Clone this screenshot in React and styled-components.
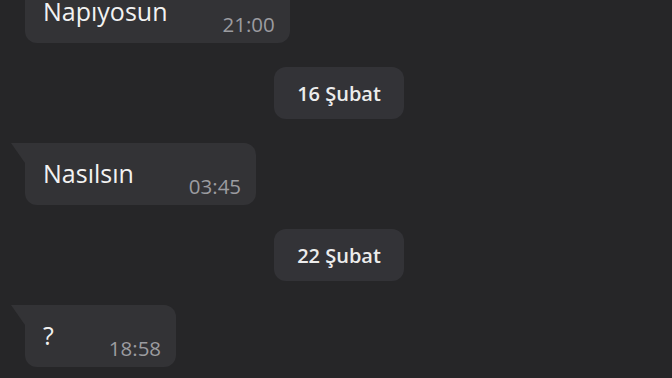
import React from 'react';
import styled, { createGlobalStyle } from 'styled-components';

const messages = [
  { type: 'msg', text: 'Napıyosun', time: '21:00', tail: false },
  { type: 'date', text: '16 Şubat' },
  { type: 'msg', text: 'Nasılsın', time: '03:45', tail: true },
  { type: 'date', text: '22 Şubat' },
  { type: 'msg', text: '?', time: '18:58', tail: true },
];

export default function App() {
  return (
    <>
      <GlobalStyle />
      <Chat>
        {messages.map((m, i) =>
          m.type === 'date' ? (
            <DateRow key={i}>
              <DatePill>{m.text}</DatePill>
            </DateRow>
          ) : (
            <Bubble key={i} $tail={m.tail}>
              <Text>{m.text}</Text>
              <Time>{m.time}</Time>
            </Bubble>
          )
        )}
      </Chat>
    </>
  );
}

const GlobalStyle = createGlobalStyle`
  html, body {
    margin: 0;
    padding: 0;
    background: #262628;
    overflow: hidden;
    height: 378px;
  }
  body {
    font-family: "Open Sans", "Noto Sans", sans-serif;
  }
`;

const Chat = styled.div`
  display: flex;
  flex-direction: column;
  align-items: flex-start;
  gap: 24px;
  margin-top: -19px;
  padding: 0 25px;
`;

const Bubble = styled.div`
  position: relative;
  display: flex;
  align-items: flex-end;
  gap: 55px;
  height: 62px;
  box-sizing: border-box;
  padding: 0 15px 9px 18px;
  background: #333336;
  border-radius: ${p => (p.$tail ? '0 12px 12px 12px' : '12px')};

  &::before {
    content: '';
    display: ${p => (p.$tail ? 'block' : 'none')};
    position: absolute;
    left: -14px;
    top: 0;
    width: 14px;
    height: 20px;
    background: #333336;
    clip-path: polygon(0 0, 100% 0, 100% 100%);
  }
`;

const Text = styled.span`
  align-self: center;
  margin-top: 8px;
  font-size: 25px;
  color: #f2f2f2;
  line-height: 1;
`;

const Time = styled.span`
  font-size: 20.5px;
  color: #9c9ca0;
  line-height: 1;
  margin-left: auto;
`;

const DateRow = styled.div`
  align-self: stretch;
  display: flex;
  justify-content: center;
  padding-left: 6px;
`;

const DatePill = styled.div`
  width: 130px;
  height: 52px;
  display: flex;
  align-items: center;
  justify-content: center;
  background: #333337;
  border-radius: 12px;
  font-size: 20px;
  font-weight: 600;
  color: #ececec;
`;
